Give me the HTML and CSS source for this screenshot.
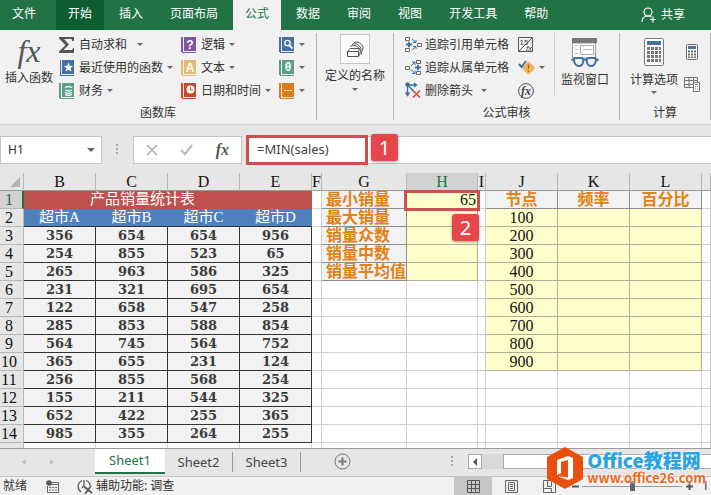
FILE: index.html
```html
<!DOCTYPE html>
<html lang="zh-CN">
<head>
    <meta charset="UTF-8">
    <title>产品销量统计表</title>
    <link rel="stylesheet" href="styles.css">
</head>
<body>
    <nav class="tabs">
        <a href="#" class="file">文件</a>
        <a href="#" class="hover">开始</a>
        <a href="#">插入</a>
        <a href="#">页面布局</a>
        <a href="#" class="selected">公式</a>
        <a href="#">数据</a>
        <a href="#">审阅</a>
        <a href="#">视图</a>
        <a href="#">开发工具</a>
        <a href="#">帮助</a>
        <a href="#" class="share">
            <svg width="16" height="16" viewBox="0 0 16 16" fill="none" stroke="#fff" stroke-width="1.2"><circle cx="7" cy="5" r="4"/><path d="M1 15c0-4 2-6 6-6 1.500 0 2.500.3 3.500 1M12 9.500v6M9 12.500h6"/></svg>共享</a>
    </nav>

    <!-- 功能区 -->
    <div class="ribbon">
        <section class="group library">
            <div class="tools">
                <button class="big insert">
                    <span class="fx">fx</span>
                    插入函数
                </button>
                <div class="col recent">
                    <button class="sum"><svg width="16" height="16" viewBox="0 0 16 16"><path d="M0 0h15v4h-1.500L12.500 2H5l5 5.500L4.500 13H13l1.200-2H15v5H0v-1.500L6.500 8 0 1.500z" fill="#555"/></svg>自动求和<i class="caret"></i></button>
                    <button><svg width="16" height="16" viewBox="0 0 16 16" fill="#44719f"><path d="M1 0h1v15H1zM3 0h12v14H3zM1 15h14v1H1z"/><path d="M9.500 2.500l1.300 3.200 3.400.2-2.600 2.200.8 3.400-2.900-1.800-2.900 1.800.8-3.400L4.800 5.900l3.400-.2z" fill="#fff"/></svg>最近使用的函数<i class="caret"></i></button>
                    <button><svg width="16" height="16" viewBox="0 0 16 16" fill="#5b9e85"><path d="M0 0h2v15H0zM3 0h12v14H3zM1 15h14v1H1z"/><path d="M6 4.500c2-1 5-1 7 0M6 7c2 1 5 1 7 0M6 9.500c2 1 5 1 7 0M6 11.500c2 1 5 1 7 0" fill="none" stroke="#fff" stroke-width="1.300"/></svg>财务<i class="caret"></i></button>
                </div>
                <div class="col kinds">
                    <button><svg width="16" height="16" viewBox="0 0 16 16" fill="#7e57a0"><path d="M0 0h2v15H0zM3 0h12v14H3zM1 15h14v1H1z"/><text x="9" y="12" class="letter">?</text></svg>逻辑<i class="caret"></i></button>
                    <button><svg width="16" height="16" viewBox="0 0 16 16" fill="#e2bd77"><path d="M0 0h2v15H0zM3 0h12v14H3zM1 15h14v1H1z"/><text x="9" y="12" class="letter">A</text></svg>文本<i class="caret"></i></button>
                    <button><svg width="16" height="16" viewBox="0 0 16 16" fill="#c64a2c"><path d="M0 0h2v15H0zM3 0h12v14H3zM1 15h14v1H1z"/><circle cx="9.500" cy="6.500" r="4" fill="#fff"/><path d="M9.500 4v3H12" fill="none" stroke="#c64a2c"/></svg>日期和时间<i class="caret"></i></button>
                </div>
                <div class="col more">
                    <button aria-label="查找与引用"><svg width="16" height="16" viewBox="0 0 16 16" fill="#44719f"><path d="M0 0h2v15H0zM3 0h12v14H3zM1 15h14v1H1z"/><path d="M10 8l3.500 3.500" stroke="#fff" stroke-width="2"/><circle cx="8.500" cy="6" r="2.700" fill="none" stroke="#fff" stroke-width="1.300"/></svg><i class="caret"></i></button>
                    <button aria-label="数学和三角函数"><svg width="16" height="16" viewBox="0 0 16 16" fill="#5b9e85"><path d="M0 0h2v15H0zM3 0h12v14H3zM1 15h14v1H1z"/><text x="9" y="11" class="letter">θ</text></svg><i class="caret"></i></button>
                    <button aria-label="其他函数"><svg width="16" height="16" viewBox="0 0 16 16" fill="#dd7a1c"><path d="M0 0h2v15H0zM3 0h12v14H3zM1 15h14v1H1z"/><path d="M5 7h2v1H5zM8 7h2v1H8zM11 7h2v1h-2z" fill="#fff"/></svg><i class="caret"></i></button>
                </div>
            </div>
            <h2>函数库</h2>
        </section>
        <section class="group names">
            <button class="big">
                <span class="frame"><svg width="18" height="18" viewBox="0 0 18 18" fill="none" stroke="#555"><path d="M1.500 11.500h11v5h-11zM1.500 11.500L4 8.500h9.500l-1 3M4 6.500c3-2 7-1 9.500 2M6 4.500c4-2 7 0 9 4l-1.500 7M8 2.500c4-1.500 8 1 9 5l-2 7"/></svg></span>
                定义的名称<i class="caret"></i>
            </button>
        </section>
        <section class="group audit">
            <div class="tools">
                <div class="col trace">
                    <button><svg width="17" height="17" viewBox="0 0 17 17" fill="none" stroke="#666"><path d="M.5 1.500h4v3h-4zM.5 12.500h4v3h-4zM12.500 7.500h4v3h-4z"/><path d="M1 8.500h6M4 5.800v5.400" stroke="#3a6ea5" stroke-width="1.800"/><path d="M7 3l4 3.500M11 4v2.500H8M7 14l4-3.500M8 10.500h3V13" stroke="#3a6ea5"/></svg>追踪引用单元格</button>
                    <button><svg width="17" height="17" viewBox="0 0 17 17" fill="none" stroke="#666"><path d="M11.500 1.500h4v3h-4zM11.500 12.500h4v3h-4zM.5 7.500h4v3h-4z"/><path d="M10 8.500h6M13 5.800v5.400" stroke="#3a6ea5" stroke-width="1.800"/><path d="M6 7l4-4M7 3h3v3M6 10.500l4 4M10 11.500v3H7" stroke="#3a6ea5"/></svg>追踪从属单元格</button>
                    <button class="remove"><svg width="17" height="17" viewBox="0 0 17 17" fill="none" stroke="#3a6ea5" stroke-width="1.400"><path d="M2.500 3v10M.5 10.500l2 3 2-3M2.500 3h9M9 1l2.500 2L9 5M3 3l6 7"/><circle cx="2.500" cy="2.500" r="1.500" fill="#3a6ea5"/><path d="M8 8.500l7 7M15 8.500l-7 7" stroke="#cf5340" stroke-width="1.700"/></svg>删除箭头<i class="caret"></i></button>
                </div>
                <div class="col checks">
                    <button aria-label="显示公式"><svg width="16" height="16" viewBox="0 0 16 16" fill="none" stroke="#555"><path d="M.5.5h14v14H.5zM1 14L14 1"/><text x="6" y="8" class="tiny">15</text><text x="11" y="14" class="tiny slant">fx</text></svg></button>
                    <button aria-label="错误检查"><svg width="17" height="16" viewBox="0 0 17 16"><path d="M10.500 2.500l5.500 5.500-5.500 5.500L5 8z" fill="#f0b562" stroke="#f0b562" stroke-width="2" stroke-linejoin="round"/><path d="M10.500 4.500v4.500M10.500 10.500V12" stroke="#a9681b" stroke-width="1.500"/><path d="M1 4l2.500 3L8 1" fill="none" stroke="#3a6ea5" stroke-width="2"/></svg><i class="caret"></i></button>
                    <button aria-label="公式求值"><svg width="16" height="16" viewBox="0 0 16 16"><circle cx="8" cy="8" r="7.400" fill="none" stroke="#555"/><text x="8" y="12" class="round">fx</text></svg></button>
                </div>
                <button class="big watch">
                    <svg width="30" height="30" viewBox="0 0 30 30" fill="none"><path d="M2.500 5h23v15h-23z" fill="#fff" stroke="#999"/><path d="M2 0h25v5H2z" fill="#777"/><path d="M10.500 7.500h13v9h-13z" stroke="#aaa"/><path d="M5 7.500h3M5 11.500h3M5 15.500h3M13 11.500h8" stroke="#bbb"/><path d="M5 20h7c2 0 2 8-3 8s-6-8-4-8zM18 20h7c2 0 1 8-4 8s-5-8-3-8z" fill="#f1f1f1" stroke="#44719f" stroke-width="2"/><path d="M13 22.500c1-1.500 3-1.500 4 0M1.500 22.500L5 20M28.500 22.500L25 20" stroke="#44719f" stroke-width="2"/></svg>
                    监视窗口
                </button>
            </div>
            <h2>公式审核</h2>
        </section>
        <section class="group calc">
            <div class="tools">
                <button class="big">
                    <svg width="20" height="28" viewBox="0 0 20 28"><rect x=".5" y=".5" width="19" height="27" rx="1" fill="#fff" stroke="#777"/><path d="M3 3h14v4H3z" fill="#44719f"/><path d="M3 9h3v3H3zM7 9h3v3H7zM11 9h3v3h-3zM15 9h2v3h-2zM3 13h3v3H3zM7 13h3v3H7zM11 13h3v3h-3zM15 13h2v3h-2zM3 17h3v3H3zM7 17h3v3H7zM11 17h3v3h-3zM15 17h2v3h-2zM3 21h3v3H3zM7 21h3v3H7zM11 21h3v3h-3zM15 21h2v3h-2z" fill="#777"/></svg>
                    计算选项<i class="caret"></i>
                </button>
                <div class="col now">
                    <button aria-label="开始计算"><svg width="12" height="16" viewBox="0 0 12 16"><rect x=".5" y=".5" width="11" height="15" rx="1" fill="#fff" stroke="#666"/><path d="M2 2h8v3H2z" fill="#44719f"/><path d="M2 6.500h2v2H2zM5 6.500h2v2H5zM8 6.500h2v2H8zM2 9.500h2v2H2zM5 9.500h2v2H5zM8 9.500h2v2H8zM2 12.500h2v1.500H2zM5 12.500h2v1.500H5zM8 12.500h2v1.500H8z" fill="#666"/></svg></button>
                    <button aria-label="计算工作表"><svg width="16" height="16" viewBox="0 0 16 16" fill="none" stroke="#777"><path d="M.5 1.500h13v10H.5zM.5 4.500h13M.5 8.500h13M5 1.500v10M9.500 1.500v10"/><path d="M9.500 6.500h6v9h-6z" fill="#fff"/><path d="M11 8.500h3"/><path d="M11 10.500h1M13 10.500h1M11 13h1M13 13h1"/></svg></button>
                </div>
            </div>
            <h2>计算</h2>
        </section>
    </div>

    <!-- 编辑栏 -->
    <div class="formula-bar">
        <div class="name-box">
            <select aria-label="名称框"><option>H1</option></select><i class="caret"></i>
        </div>
        <svg class="dots" width="3" height="11" viewBox="0 0 3 11" fill="#aaa"><path d="M0 0h2v2H0zM0 4h2v2H0zM0 8h2v2H0z"/></svg>
        <div class="entry">
            <button aria-label="取消"><svg width="12" height="12" viewBox="0 0 12 12" stroke="#bbb" stroke-width="1.800"><path d="M1 1l10 10M11 1L1 11"/></svg></button>
            <button aria-label="输入"><svg width="13" height="12" viewBox="0 0 13 12" fill="none" stroke="#bbb" stroke-width="2.200"><path d="M1 6l4 4 7-9"/></svg></button>
            <button class="fx" aria-label="插入函数">fx</button>
        </div>
        <div class="formula">
            <input type="text" aria-label="编辑栏" value="=MIN(sales)">
            <span class="mark"></span>
            <span class="badge">1</span>
        </div>
    </div>

    <table class="sheet">
        <colgroup>
            <col class="w-head"><col class="w-data"><col class="w-data"><col class="w-data"><col class="w-data">
            <col class="w-f"><col class="w-g"><col class="w-h"><col class="w-i">
            <col class="w-data"><col class="w-data"><col class="w-data"><col>
        </colgroup>
        <thead>
            <tr>
                <th class="corner"><svg width="10" height="10" viewBox="0 0 10 10"><path d="M10 0v10H0z" fill="#b4b4b4"/></svg></th>
                <th>B</th><th>C</th><th>D</th><th>E</th><th>F</th><th>G</th><th class="active">H</th><th>I</th><th>J</th><th>K</th><th>L</th><th></th>
            </tr>
        </thead>
        <tbody id="rows"></tbody>
    </table>

    <div class="sheet-tabs">
        <div class="arrows">
            <button aria-label="上一个"><svg width="4" height="6" viewBox="0 0 4 6"><path d="M4 0v6L0 3z" fill="#c0c0c0"/></svg></button>
            <button aria-label="下一个"><svg width="4" height="6" viewBox="0 0 4 6"><path d="M0 0v6l4-3z" fill="#c0c0c0"/></svg></button>
        </div>
        <a href="#" class="selected">Sheet1</a>
        <a href="#">Sheet2</a>
        <a href="#">Sheet3</a>
        <button class="add" aria-label="新工作表"><svg width="17" height="17" viewBox="0 0 17 17" fill="none" stroke="#777"><circle cx="8.500" cy="8.500" r="7.500"/><path d="M8.500 4.500v8M4.500 8.500h8" stroke-width="2"/></svg></button>
        <svg class="dots" width="3" height="11" viewBox="0 0 3 11" fill="#aaa"><path d="M0 0h2v2H0zM0 4h2v2H0zM0 8h2v2H0z"/></svg>
        <div class="scroll">
            <button aria-label="向左滚动"><svg width="4" height="8" viewBox="0 0 4 8"><path d="M4 0v8L0 4z" fill="#555"/></svg></button>
            <span class="thumb"></span>
        </div>
    </div>

    <div class="status">
        <span class="ready">就绪</span>
        <svg class="macro" width="13" height="13" viewBox="0 0 13 13" fill="none" stroke="#666"><path d="M5 2.500h7.500v10H1.500V6M5 4.500h7M3 7.500h2M6 7.500h2M9 7.500h2M3 10h2M6 10h2M9 10h2"/><circle cx="3" cy="3" r="2.800" fill="#555" stroke="none"/></svg>
        <svg class="access" width="16" height="15" viewBox="0 0 16 15" fill="none" stroke="#555" stroke-width="1.300"><path d="M5 1.500C0 4 0 10 4 13M7 1v5l-2 3M9 1.500c3 1 4 3 4 5"/><path d="M7 7.500l8 6.500M14 7l-6 8" stroke-width="1.700"/></svg>
        <span>辅助功能: 调查</span>
        <div class="views">
            <button class="selected" aria-label="普通"><svg width="13" height="13" viewBox="0 0 13 13" fill="none" stroke="#555"><path d="M.5.5h12v12H.5zM.5 4.500h12M.5 8.500h12M4.500.5v12M8.500.5v12"/></svg></button>
            <button aria-label="页面布局"><svg width="13" height="13" viewBox="0 0 13 13" fill="none" stroke="#666"><path d="M.5.5h12v12H.5zM3.500 2.500h6v8h-6zM5 4.500h3M5 6.500h3M5 8.500h3"/></svg></button>
            <button aria-label="分页预览"><svg width="13" height="13" viewBox="0 0 13 13" fill="none" stroke="#666"><path d="M.5.5h12v12H.5zM4.500.5v6h4v-6M.5 8.500h8v4"/></svg></button>
        </div>
        <button class="step" aria-label="缩小"><svg width="7" height="7" viewBox="0 0 7 7" stroke="#555" stroke-width="2"><path d="M0 3.500h7"/></svg></button>
        <input type="range" class="zoom" aria-label="显示比例" min="0" max="100" value="50">
        <button class="step" aria-label="放大"><svg width="7" height="7" viewBox="0 0 7 7" stroke="#555" stroke-width="2"><path d="M0 3.500h7M3.500 0v7"/></svg></button>
        <span class="percent">1</span>
    </div>

    <div class="brand">
        <svg width="36" height="42" viewBox="0 0 36 42"><path d="M18 0l18 10v22L18 42 0 32V10z" fill="#e8500e"/><path d="M10 13l11-4 5 2v20l-5 2-11-4 11 1.500V13l-7 1.800v11.400L10 28z" fill="#fff"/></svg>
        <p>
            <strong>Office教程网</strong>
            <span>www.office26.com</span>
        </p>
    </div>

    <script>
        var sales=[
            [356,654,654,956],[254,855,523,65],[265,963,586,325],[231,321,695,654],
            [122,658,547,258],[285,853,588,854],[564,745,564,752],[365,655,231,124],
            [256,855,568,254],[155,211,544,325],[652,422,255,365],[985,355,264,255]
        ];
        var shops=['超市A','超市B','超市C','超市D'];
        var stats=['最小销量','最大销量','销量众数','销量中数','销量平均值'];
        var heads=['节点','频率','百分比'];
        function cell(cls,text){
            return '<td class="'+cls+'">'+text+'</td>';
        }
        var html='';
        for(var r=1;r<=14;r++){
            html+='<tr><th class="'+(r==1?'active':'')+'">'+r+'</th>';
            if(r==1){
                html+='<td class="title" colspan="4">产品销量统计表</td>';
            }else{
                for(var c=0;c<4;c++){
                    html+=r==2?cell('shop',shops[c]):cell('num',sales[r-3][c]);
                }
            }
            html+=cell('','');
            if(r<=5){
                html+=cell('stat',stats[r-1]);
                html+=r==1?cell('yellow result','65<span class="mark"></span><span class="badge">2</span>'):cell('yellow','');
            }else{
                html+=cell('','')+cell('','');
            }
            html+=cell('','');
            for(var k=0;k<3;k++){
                if(r==1){
                    html+=cell('head',heads[k]);
                }else if(r<=10){
                    html+=cell('yellow',k==0?(r-1)*100:'');
                }else{
                    html+=cell('','');
                }
            }
            html+=cell('','')+'</tr>';
        }
        //最后一行只露出上边一部分
        html+='<tr class="cut"><th></th>';
        for(var n=0;n<12;n++){
            html+=cell('','');
        }
        html+='</tr>';
        document.getElementById('rows').innerHTML=html;
    </script>
</body>
</html>
```

FILE: styles.css
```css
*{
    margin: 0;
    padding: 0;
    box-sizing: border-box;
}
body{
    background: #e6e6e6;
    color: #333;
    font: 12px/18px "Noto Sans", "Noto Sans CJK SC", sans-serif;
    position: relative;
    overflow: hidden;
}
a{
    color: inherit;
    text-decoration: none;
}
button{
    border: 0;
    background: none;
    font: inherit;
    color: inherit;
    display: flex;
    align-items: center;
    white-space: nowrap;
}
svg{
    flex: none;
    display: block;
}
.caret{
    flex: none;
    border: 3px solid transparent;
    border-top-color: #666;
    border-bottom: 0;
}
.fx{
    font-family: "Liberation Serif", serif;
    font-style: italic;
    color: #555;
}
/* 图标里的字 */
.letter,
.tiny,
.round{
    text-anchor: middle;
    stroke: none;
}
.letter{
    fill: #fff;
    font: bold 12px "Liberation Sans", sans-serif;
}
.tiny{
    fill: #444;
    font: 8px "Liberation Sans", sans-serif;
}
.slant{
    font-style: italic;
}
.round{
    fill: #444;
    font: italic bold 12px "Liberation Serif", serif;
}
/* 选项卡 */
.tabs{
    display: flex;
    gap: 3px;
    height: 30px;
    background: #217346;
    color: #fff;
    line-height: 28px;
    white-space: nowrap;
}
.tabs a{
    padding: 0 12px;
}
.tabs .file{
    margin-right: 5px;
}
.tabs .hover{
    background: #0e5c2f;
}
.tabs .selected{
    background: #f1f1f1;
    color: #217346;
}
.tabs .share{
    display: flex;
    align-items: center;
    gap: 4px;
    margin-left: auto;
    padding-right: 26px;
}
/* 功能区 */
.ribbon{
    display: flex;
    height: 95px;
    background: #f1f1f1;
    border-bottom: 1px solid #d2d2d2;
    padding-top: 3px;
}
.group{
    display: flex;
    flex-direction: column;
    height: 87px;
    border-right: 1px solid #b5b5b5;
}
.group h2{
    font-size: 12px;
    font-weight: normal;
    line-height: 22px;
    text-align: center;
}
.library{
    width: 317px;
}
.names{
    width: 77px;
    align-items: center;
}
.audit{
    width: 226px;
}
.calc{
    flex: 1;
}
.tools{
    display: flex;
    height: 69px;
}
.col button{
    height: 23px;
    gap: 4px;
}
.big{
    flex-direction: column;
    height: 69px;
    padding-top: 3px;
}
.big svg{
    margin-bottom: 3px;
}
.insert{
    margin: 0 6px 0 5px;
}
.insert .fx{
    height: 33px;
    font-size: 32px;
    line-height: 30px;
}
.recent{
    width: 122px;
}
.recent .sum .caret{
    margin-left: 6px;
}
.kinds{
    width: 98px;
}
.names .big{
    padding-top: 1px;
}
.names .caret{
    margin-top: 3px;
}
.frame{
    width: 30px;
    height: 30px;
    margin-bottom: 3px;
    padding: 5px;
    background: #fafafa;
    border: 1px solid #c6c6c6;
}
.trace{
    width: 124px;
    padding-left: 11px;
}
.trace button{
    gap: 3px;
}
.trace .remove .caret{
    margin-left: 5px;
}
.checks{
    width: 37px;
    height: 62px;
    border-right: 1px solid #d0d0d0;
}
.watch{
    margin-left: 6px;
    padding-top: 5px;
}
.calc .big{
    margin-left: 10px;
    padding-top: 5px;
}
.calc .big svg{
    margin-bottom: 5px;
}
.calc .caret{
    margin-top: 2px;
}
.now{
    padding: 3px 0 0 6px;
}
.now button{
    width: 16px;
    height: 32px;
    justify-content: center;
}
/* 编辑栏 */
.formula-bar{
    display: flex;
    align-items: center;
    height: 48px;
    padding-top: 1px;
}
.name-box{
    position: relative;
    width: 102px;
    height: 28px;
}
.name-box select{
    appearance: none;
    width: 100%;
    height: 100%;
    padding-left: 7px;
    background: #fff;
    border: 1px solid #c6c6c6;
    font: inherit;
    color: inherit;
}
.name-box .caret{
    position: absolute;
    right: 7px;
    top: 12px;
    border-width: 4px 4px 0;
    pointer-events: none;
}
.formula-bar .dots{
    margin: 0 14px;
}
.entry{
    display: flex;
    align-items: center;
    justify-content: space-between;
    width: 109px;
    height: 28px;
    padding: 0 12px;
    background: #fff;
    border: 1px solid #c6c6c6;
}
.entry .fx{
    font-size: 16px;
    font-weight: bold;
}
.formula{
    position: relative;
    flex: 1;
    height: 28px;
    margin-left: 4px;
}
.formula input{
    width: 100%;
    height: 100%;
    padding: 0 0 2px 10px;
    background: #fff;
    border: 1px solid #c6c6c6;
    border-right: 0;
    font: 13px "Noto Sans", sans-serif;
    color: #444;
}
.mark{
    position: absolute;
    border: 3px solid #cd4f52;
    pointer-events: none;
}
.badge{
    position: absolute;
    width: 27px;
    height: 27px;
    background: #e5474a;
    border-radius: 3px;
    box-shadow: 0 1px 3px rgba(0,0,0,.4);
    color: #fff;
    font: 20px/27px "Noto Sans", sans-serif;
    text-align: center;
}
.formula .mark{
    left: 0;
    top: -1px;
    width: 122px;
    height: 30px;
}
.formula .badge{
    left: 125px;
    top: -2px;
}
/* 工作表 */
.sheet{
    width: 100%;
    table-layout: fixed;
    border-spacing: 0;
    background: #fff;
    color: #111;
    font: 16px/17px "Liberation Serif", "Noto Sans CJK SC", serif;
    text-align: center;
    white-space: nowrap;
}
.w-head{
    width: 24px;
}
.w-data{
    width: 72px;
}
.w-f{
    width: 10px;
}
.w-g{
    width: 85px;
}
.w-h{
    width: 71px;
}
.w-i{
    width: 8px;
}
.sheet tr{
    height: 18px;
}
.sheet th{
    background: #e6e6e6;
    border-right: 1px solid #b8b8b8;
    border-bottom: 1px solid #b8b8b8;
    font-weight: normal;
}
.sheet thead th{
    border-bottom-color: #999;
}
.sheet tbody th{
    padding-right: 5px;
}
.sheet .corner svg{
    margin-left: 10px;
}
.sheet th.active{
    background: #d2d2d2;
    color: #217346;
}
.sheet thead th.active{
    border-bottom-color: #217346;
}
.sheet tbody th.active{
    border-right: 2px solid #217346;
    padding-right: 4px;
}
.sheet td{
    border-right: 1px solid #d0d0d0;
    border-bottom: 1px solid #d0d0d0;
}
.sheet .title{
    padding-right: 50px;
    background: #c0504d;
    border-color: #c0504d;
    color: #fff;
    font-size: 15px;
}
.sheet .shop{
    background: #4f81bd;
    border-right-color: #4f81bd;
    border-bottom-color: #333;
    color: #fff;
    font-size: 15px;
}
.sheet .num{
    background: #f2f2f2;
    border-color: #333;
    color: #3a3a3a;
    font: bold 13px/17px "DejaVu Serif", serif;
}
.sheet .stat,
.sheet .head{
    background: #f2f2f2;
    border-color: #8c8c8c;
    color: #e08214;
    font-weight: bold;
}
.sheet .stat{
    padding-left: 4px;
    text-align: left;
}
.sheet .yellow{
    background: #ffc;
    border-color: #b0b09a;
}
.sheet .result{
    position: relative;
    padding-right: 1px;
    text-align: right;
}
.result .mark{
    left: -3px;
    top: -1px;
    width: 76px;
    height: 21px;
}
.result .badge{
    left: 45px;
    top: 23px;
}
.sheet .cut{
    height: 5px;
}
.sheet .cut td,
.sheet .cut th{
    border-bottom: 0;
}
/* 工作表标签 */
.sheet-tabs{
    display: flex;
    align-items: center;
    height: 29px;
    border-top: 1px solid #999;
    border-bottom: 1px solid #c6c6c6;
    padding-bottom: 2px;
    font-size: 13px;
    color: #444;
}
.arrows{
    display: flex;
    gap: 24px;
    width: 95px;
    padding-left: 22px;
}
.sheet-tabs a{
    width: 68px;
    line-height: 20px;
    text-align: center;
    border-right: 1px solid #999;
}
.sheet-tabs .selected{
    align-self: flex-start;
    width: 70px;
    height: 25px;
    line-height: 23px;
    background: #fff;
    border-right: 0;
    border-bottom: 2px solid #217346;
    color: #217346;
}
.add{
    margin-left: 33px;
}
.sheet-tabs .dots{
    margin-left: 100px;
}
.scroll{
    display: flex;
    flex: 1;
    height: 15px;
    margin-left: 14px;
    background: #d9d9d9;
}
.scroll button{
    width: 14px;
    justify-content: center;
    background: #fff;
    border: 1px solid #aaa;
}
.thumb{
    flex: 1;
    margin-left: 21px;
    background: #fff;
    border: 1px solid #aaa;
    border-right: 0;
}
/* 状态栏 */
.status{
    display: flex;
    align-items: center;
    height: 18px;
    background: #f1f1f1;
    white-space: nowrap;
}
.ready{
    margin-left: 3px;
}
.macro{
    margin-left: 19px;
}
.access{
    margin: 0 3px 0 18px;
}
.views{
    display: flex;
    margin-left: auto;
}
.views button{
    width: 38px;
    height: 18px;
    justify-content: center;
}
.views .selected{
    background: #c6c6c6;
}
.step{
    width: 14px;
    justify-content: center;
}
.zoom{
    appearance: none;
    width: 100px;
    height: 1px;
    background: #999;
}
.zoom::-webkit-slider-thumb{
    appearance: none;
    width: 5px;
    height: 10px;
    background: #666;
}
.percent{
    width: 9px;
    margin-left: 6px;
}
/* 右下角标志 */
.brand{
    position: absolute;
    right: 5px;
    bottom: 6px;
    display: flex;
    align-items: center;
    gap: 4px;
}
.brand p{
    display: flex;
    flex-direction: column;
    font-family: "Noto Sans CJK SC", sans-serif;
    font-weight: bold;
    text-shadow: 0 0 2px #fff, 0 0 2px #fff;
}
.brand strong{
    color: #2ba3e3;
    font-size: 19px;
    line-height: 20px;
}
.brand span{
    color: #ea6a1c;
    font-size: 13px;
    line-height: 16px;
}
```
